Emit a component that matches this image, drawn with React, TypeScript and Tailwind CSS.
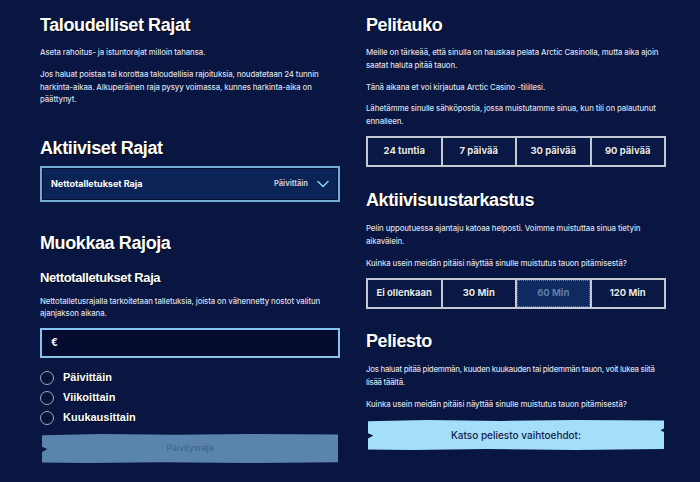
import { useState } from "react";

const HEAD = "font-['Liberation_Sans',Arial,sans-serif] font-bold text-white tracking-[-0.4px] [text-shadow:1px_1px_0_#000814]";
const BODY = "font-['Inter','Liberation_Sans',sans-serif] font-medium text-[7.8px] leading-[12.5px] text-[#dadee7]";

function Heading({ children, className = "" }: { children: React.ReactNode; className?: string }) {
  return <h2 className={`${HEAD} text-[18px] leading-[22px] ${className}`}>{children}</h2>;
}

function ChoiceRow({ options, active }: { options: string[]; active?: string }) {
  const [selected, setSelected] = useState<string | undefined>(active);
  return (
    <div className="grid grid-cols-4 gap-[2px] bg-[#c3c8d3] p-[2px]">
      {options.map((o) => {
        const on = o === selected;
        return (
          <button
            key={o}
            onClick={() => setSelected(o)}
            className={`h-[27px] font-['Inter',sans-serif] text-[9.5px] font-bold ${
              on
                ? "border border-dotted border-[#4f7fb5] bg-[#0f2a5e] text-[#5b7fa8]"
                : "bg-[#0a1845] text-[#e4e7ee] [text-shadow:1px_1px_0_#000814]"
            }`}
          >
            {o}
          </button>
        );
      })}
    </div>
  );
}

const TORN_LEFT =
  "[clip-path:polygon(0_4%,20%_0,45%_3%,70%_0,100%_2%,100%_97%,70%_100%,40%_97%,15%_100%,0_98%,0_62%,1.8%_52%,0_44%)]";
const TORN_BOTH =
  "[clip-path:polygon(0_4%,20%_0,45%_3%,70%_0,100%_2%,100%_28%,98.8%_34%,100%_40%,100%_97%,70%_100%,40%_97%,15%_100%,0_98%,0_62%,1.8%_52%,0_44%)]";

export default function App() {
  const [freq, setFreq] = useState<string | null>(null);

  return (
    <div className="min-h-[482px] w-[700px] bg-[#081641] pl-[40px]">
      <div className="grid grid-cols-[300px_300px] gap-x-[26px]">
        {/* left column */}
        <div className="flex flex-col pt-[14px]">
          <Heading>Taloudelliset Rajat</Heading>
          <p className={`${BODY} mt-[10px] tracking-[-0.1px]`}>Aseta rahoitus- ja istuntorajat milloin tahansa.</p>
          <p className={`${BODY} mt-[9.5px] tracking-[-0.1px]`}>
            Jos haluat poistaa tai korottaa taloudellisia rajoituksia, noudatetaan 24 tunnin harkinta-aikaa. Alkuperäinen raja pysyy voimassa, kunnes harkinta-aika on päättynyt.
          </p>

          <Heading className="mt-[31px]">Aktiiviset Rajat</Heading>
          <button className="mt-[7px] flex h-[36px] items-center justify-between border-2 border-[#75acd3] bg-[#0c2358] px-[9px] shadow-[inset_0_0_0_1px_#041033]">
            <span className="font-['Inter',sans-serif] text-[9px] font-bold text-white">Nettotalletukset Raja</span>
            <span className="flex items-center gap-[9px]">
              <span className="font-['Inter',sans-serif] text-[7.5px] font-bold text-[#c3c8d4]">Päivittäin</span>
              <svg width="12" height="8" viewBox="0 0 12 8" fill="none" stroke="#8ccbef" strokeWidth="1.6" strokeLinecap="round" strokeLinejoin="round">
                <path d="M1 1.5l5 5 5-5" />
              </svg>
            </span>
          </button>

          <Heading className="mt-[30px]">Muokkaa Rajoja</Heading>
          <h3 className={`${HEAD} mt-[16px] text-[13px] leading-[16px]`}>Nettotalletukset Raja</h3>
          <p className={`${BODY} mt-[9px] tracking-[-0.1px]`}>
            Nettotalletusrajalla tarkoitetaan talletuksia, joista on vähennetty nostot valitun ajanjakson aikana.
          </p>
          <label className="mt-[8px] flex h-[30px] items-center border-2 border-[#86c4ec] bg-[#040c30] px-[9px]">
            <span className="font-['Inter',sans-serif] text-[10px] font-bold text-white">€</span>
            <input className="ml-1 w-full bg-transparent text-[10px] text-white outline-none" />
          </label>

          <div className="mt-[10px] flex flex-col">
            {["Päivittäin", "Viikoittain", "Kuukausittain"].map((r) => (
              <button key={r} onClick={() => setFreq(r)} className="flex h-[20px] items-center gap-[9px]">
                <span className="flex h-[14px] w-[14px] items-center justify-center rounded-full border-[1.5px] border-[#a3a8b4] bg-[#07123a]">
                  {freq === r && <span className="h-[6px] w-[6px] rounded-full bg-white" />}
                </span>
                <span className={`${HEAD} text-[11px] tracking-normal`}>{r}</span>
              </button>
            ))}
          </div>

          <button className={`mx-[2px] mt-[6.5px] flex h-[29px] items-center justify-center bg-[#5b84ad] ${TORN_LEFT}`}>
            <span className="font-['Inter',sans-serif] text-[8.5px] font-medium text-[#3e6590]">Päivitysraja</span>
          </button>
        </div>

        {/* right column */}
        <div className="flex flex-col pt-[14px]">
          <Heading>Pelitauko</Heading>
          <p className={`${BODY} mt-[10px] tracking-[-0.1px]`}>
            Meille on tärkeää, että sinulla on hauskaa pelata Arctic Casinolla, mutta aika ajoin saatat haluta pitää tauon.
          </p>
          <p className={`${BODY} mt-[9.5px] tracking-[-0.1px]`}>Tänä aikana et voi kirjautua Arctic Casino -tilillesi.</p>
          <p className={`${BODY} mt-[9px] tracking-[-0.1px]`}>
            Lähetämme sinulle sähköpostia, jossa muistutamme sinua, kun tili on palautunut ennalleen.
          </p>
          <div className="mt-[9px]">
            <ChoiceRow options={["24 tuntia", "7 päivää", "30 päivää", "90 päivää"]} />
          </div>

          <Heading className="mt-[22px]">Aktiivisuustarkastus</Heading>
          <p className={`${BODY} mt-[11px] tracking-[-0.1px]`}>
            Pelin uppoutuessa ajantaju katoaa helposti. Voimme muistuttaa sinua tietyin aikavälein.
          </p>
          <p className={`${BODY} mt-[9.5px] tracking-[-0.1px]`}>Kuinka usein meidän pitäisi näyttää sinulle muistutus tauon pitämisestä?</p>
          <div className="mt-[9px]">
            <ChoiceRow options={["Ei ollenkaan", "30 Min", "60 Min", "120 Min"]} active="60 Min" />
          </div>

          <Heading className="mt-[21px]">Peliesto</Heading>
          <p className={`${BODY} mt-[11px] tracking-[-0.25px]`}>
            Jos haluat pitää pidemmän, kuuden kuukauden tai pidemmän tauon, voit lukea siitä lisää täältä.
          </p>
          <p className={`${BODY} mt-[9.5px] tracking-[-0.1px]`}>Kuinka usein meidän pitäisi näyttää sinulle muistutus tauon pitämisestä?</p>
          <button className={`mx-[2px] mt-[10px] flex h-[30px] items-center justify-center bg-[#a4dffa] ${TORN_BOTH}`}>
            <span className="font-['Inter',sans-serif] text-[10px] font-medium text-[#17214d]">Katso peliesto vaihtoehdot:</span>
          </button>
        </div>
      </div>
    </div>
  );
}
